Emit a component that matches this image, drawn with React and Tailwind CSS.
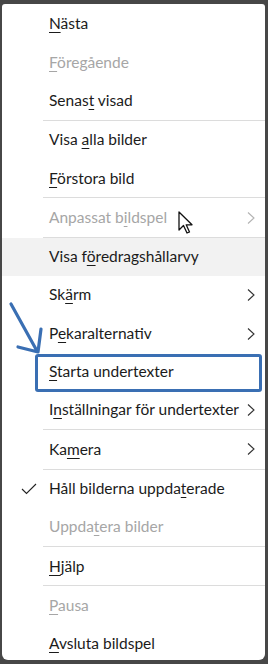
const items = [
  { label: 'Nästa', key: 0 },
  { label: 'Föregående', key: 0, disabled: true },
  { label: 'Senast visad', key: 5 },
  'sep',
  { label: 'Visa alla bilder', key: 5 },
  { label: 'Förstora bild', key: 0 },
  'sep',
  { label: 'Anpassat bildspel', key: 10, disabled: true, sub: true, cursor: true },
  'sep',
  { label: 'Visa föredragshållarvy', key: 6, hover: true },
  { label: 'Skärm', key: 2, sub: true },
  { label: 'Pekaralternativ', key: 1, sub: true, arrow: true },
  { label: 'Starta undertexter', key: 0, boxed: true },
  { label: 'Inställningar för undertexter', key: 1, sub: true },
  'sep',
  { label: 'Kamera', key: 2, sub: true },
  'sep',
  { label: 'Håll bilderna uppdaterade', key: 19, checked: true },
  { label: 'Uppdatera bilder', key: 5, disabled: true },
  'sep',
  { label: 'Hjälp', key: 0 },
  'sep',
  { label: 'Pausa', key: 0, disabled: true },
  { label: 'Avsluta bildspel', key: 0 },
];

function Label({ text, k }) {
  return (
    <span>
      {text.slice(0, k)}
      <span className="underline underline-offset-[3px] decoration-[1px]">{text[k]}</span>
      {text.slice(k + 1)}
    </span>
  );
}

function Chevron({ light }) {
  return (
    <svg width="10" height="14" viewBox="0 0 10 14" className="absolute right-[9px] top-1/2 -translate-y-1/2">
      <polyline points="2,1.5 8,7 2,12.5" fill="none" stroke={light ? '#b3b3b3' : '#333'} strokeWidth="1.1" />
    </svg>
  );
}

function Row({ item }) {
  return (
    <div
      className={`relative h-[38.3px] flex items-center pl-[47px] ${item.hover ? 'bg-[#f2f2f2]' : ''} ${
        item.disabled ? 'text-[#a6a6a6]' : 'text-[#1b1b1b]'
      }`}
    >
      {item.checked && (
        <svg width="16" height="12" viewBox="0 0 16 12" className="absolute left-[19px] top-[13px]">
          <polyline points="1,6 5.5,10.5 15,1" fill="none" stroke="#222" strokeWidth="1.1" />
        </svg>
      )}
      {item.boxed && (
        <div className="absolute left-[33px] right-[3px] top-[1px] bottom-[-1px] border-[3px] border-[#3a6fb3] rounded-[3px]" />
      )}
      <Label text={item.label} k={item.key} />
      {item.sub && <Chevron light={item.disabled} />}
      {item.cursor && (
        <svg width="16" height="24" viewBox="0 0 16 24" className="absolute left-[176px] top-[13px]">
          <path d="M1 1 L1 19 L5.5 14.5 L9 22 L11.5 21 L8.2 13.8 L14 13.8 Z" fill="#fff" stroke="#111" strokeWidth="1.3" strokeLinejoin="round" />
        </svg>
      )}
      {item.arrow && (
        <svg width="44" height="70" viewBox="0 0 44 70" className="absolute left-0 top-[-18px]">
          <path d="M9 8 L35 55 M39 33 L36 56 L16 51" fill="none" stroke="#3a6fb3" strokeWidth="3.2" strokeLinecap="round" strokeLinejoin="round" />
        </svg>
      )}
    </div>
  );
}

export default function App() {
  return (
    <div className="w-[268px] h-[664px] bg-[#474747] pt-[4px] pl-[2px] pr-[3px] overflow-hidden">
      <div
        className="bg-white rounded-b-[6px] rounded-t-[3px] h-[656px] pt-[1px] text-[15.5px] leading-none"
        style={{ fontFamily: 'Lato, "Noto Sans", sans-serif' }}
      >
        {items.map((item, i) =>
          item === 'sep' ? (
            <div key={i} className="ml-[41px] h-px bg-[#dcdcdc]" />
          ) : (
            <Row key={i} item={item} />
          )
        )}
      </div>
    </div>
  );
}
